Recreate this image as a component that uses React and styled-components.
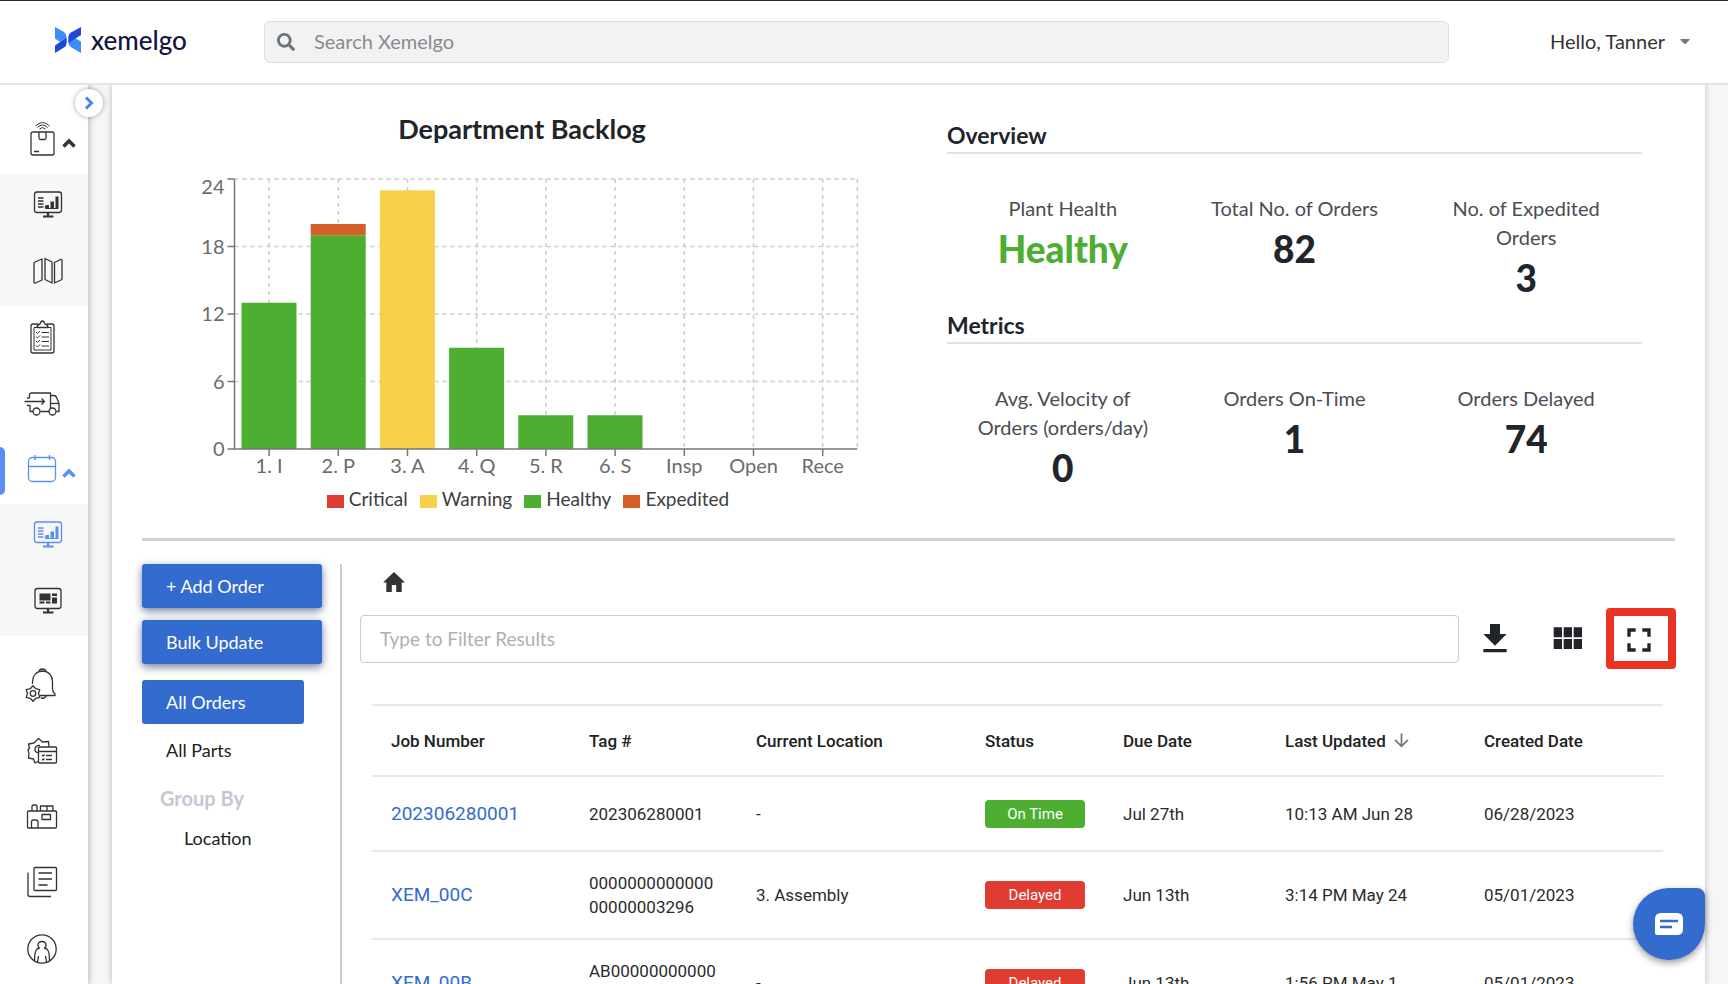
import React from "react";
import styled, { createGlobalStyle } from "styled-components";
import { FaSearch, FaCaretDown } from "react-icons/fa";
import { MdArrowDownward, MdFullscreen } from "react-icons/md";

const GlobalStyle = createGlobalStyle`
  * {
    box-sizing: border-box;
  }

  body {
    margin: 0;
    color: #212529;
    background: #f6f6f6;
    font-family: Lato, "Liberation Sans", sans-serif;
    font-size: 20px;
  }

  button, input {
    font: inherit;
    color: inherit;
  }

  button {
    padding: 0;
    border: 0;
    background: none;
    cursor: pointer;
  }
`;

const Page = styled.div`
  display: flex;
  flex-direction: column;
  height: 100vh;
  overflow: hidden;
`;

const Header = styled.header`
  display: flex;
  flex: none;
  align-items: center;
  height: 85px;
  border-top: 1px solid #2b2b2f;
  border-bottom: 2px solid #e5e5e5;
  background: #fff;
  z-index: 2;
`;

const Logo = styled.a`
  display: flex;
  flex: none;
  align-items: center;
  gap: 10px;
  width: 264px;
  padding: 0 0 4px 55px;
  color: #14153f;
  font-size: 26px;
  line-height: 32px;
  font-weight: 500;
  text-decoration: none;
`;

const SearchBox = styled.label`
  display: flex;
  flex: 1;
  align-items: center;
  gap: 19px;
  height: 42px;
  padding: 0 12px;
  border: 1px solid #d9dee3;
  border-radius: 6px;
  background: #f2f2f2;
  color: #6c757d;
`;

const SearchInput = styled.input`
  flex: 1;
  min-width: 0;
  padding: 0 0 2px;
  border: 0;
  outline: 0;
  background: none;

  &::placeholder {
    color: #868b91;
    opacity: 1;
  }
`;

const UserMenu = styled.button`
  display: flex;
  flex: none;
  align-items: center;
  justify-content: flex-end;
  gap: 12px;
  width: 279px;
  padding: 0 35px 2px 0;
  color: #333;

  svg {
    color: #777;
  }
`;

const Body = styled.div`
  display: flex;
  flex: 1;
  min-height: 0;
`;

const Sidebar = styled.nav`
  position: relative;
  flex: none;
  width: 88px;
  padding-top: 23px;
  background: #fff;
  box-shadow: 0 0 7px rgba(0, 0, 0, 0.35);
  z-index: 1;
`;

const ExpandButton = styled.button`
  position: absolute;
  top: 4px;
  right: -15px;
  display: flex;
  align-items: center;
  justify-content: center;
  width: 28px;
  height: 28px;
  border-radius: 50%;
  background: #fff;
  box-shadow: 0 0 5px rgba(0, 0, 0, 0.35);
`;

const NavItem = styled.button`
  display: flex;
  align-items: center;
  width: 100%;
  height: 66px;
  padding-bottom: 5px;
  color: ${(props) => (props.$active ? "#5b8ff5" : "#333")};
`;

const Marker = styled.span`
  width: 5px;
  height: 48px;
  margin: 5px ${(props) => (props.$nested ? "25px" : "19px")} 0 0;
  border-radius: 0 6px 6px 0;
  background: ${(props) => (props.$on ? "#5b8ff5" : "transparent")};
`;

const Caret = styled.svg`
  margin: 9px 0 0 2px;
`;

const SubMenu = styled.div`
  background: #f7f7f7;
`;

const NavGroup = styled.div`
  margin-top: 18px;
`;

const Card = styled.main`
  display: flex;
  flex: 1;
  flex-direction: column;
  min-width: 0;
  margin: 0 23px 0 24px;
  padding: 25px 30px 0;
  background: #fff;
  box-shadow: 0 0 6px rgba(0, 0, 0, 0.25);
`;

const Summary = styled.section`
  display: grid;
  grid-template-columns: minmax(0, 760fr) minmax(0, 773fr);
  padding-bottom: 25px;
  border-bottom: 3px solid #d2d2d2;
`;

const ChartTitle = styled.h2`
  margin: 0;
  font-size: 27px;
  line-height: 37px;
  text-align: center;
`;

const ChartSvg = styled.svg`
  display: block;
  width: 100%;

  text {
    fill: #6b6b6b;
    font-size: 20px;
  }
`;

const Legend = styled.ul`
  display: flex;
  justify-content: center;
  gap: 12px;
  margin: 0;
  padding: 0 0 0 12px;
  font-size: 19px;
  line-height: 28px;
  list-style: none;
`;

const LegendItem = styled.li`
  display: flex;
  align-items: center;
  gap: 5px;
  color: #3b3e42;

  &::before {
    content: "";
    width: 17px;
    height: 13px;
    margin-top: 4px;
    background: ${(props) => props.$color};
  }
`;

const Stats = styled.div`
  display: flex;
  flex-direction: column;
  gap: 11px;
  padding: 12px 33px 0 45px;
`;

const StatsTitle = styled.h3`
  margin: 0;
  padding-bottom: 4px;
  border-bottom: 2px solid #e2e2e2;
  font-size: 23px;
  line-height: 26px;
`;

const StatsRow = styled.div`
  display: grid;
  grid-template-columns: repeat(3, 1fr);
  min-height: 147px;
  padding-top: 40px;
  text-align: center;
`;

const StatLabel = styled.div`
  padding: 0 30px;
  color: #4a4d52;
  line-height: 29px;
`;

const StatValue = styled.div`
  margin-top: 4px;
  color: ${(props) => props.$color || "#212529"};
  font-size: 37px;
  font-weight: 900;
  line-height: 44px;
`;

const Orders = styled.section`
  display: flex;
  flex: 1;
  min-height: 0;
  padding-top: 23px;
`;

const Actions = styled.aside`
  display: flex;
  flex: none;
  flex-direction: column;
  align-items: flex-start;
  width: 200px;
  border-right: 2px solid #ccc;
  font-size: 18px;
`;

const ActionButton = styled.button`
  width: 180px;
  height: 44px;
  margin-bottom: 12px;
  padding-left: 24px;
  border-radius: 3px;
  background: #336bce;
  box-shadow: 0 3px 8px rgba(20, 40, 80, 0.6);
  color: #fff;
  text-align: left;
`;

const ViewLink = styled.a`
  width: 162px;
  margin-left: ${(props) => (props.$indent ? "18px" : "0")};
  padding-left: 24px;
  line-height: 40px;
  color: #212121;
  text-decoration: none;

  &[aria-current] {
    margin: 4px 0 6px;
    border-radius: 3px;
    background: #336bce;
    color: #fff;
    line-height: 44px;
  }
`;

const GroupTitle = styled.h4`
  margin: 8px 0 0 18px;
  color: #c3c8d2;
  font-size: 20px;
  line-height: 40px;
`;

const Results = styled.div`
  flex: 1;
  min-width: 0;
  padding-left: 18px;
`;

const HomeLink = styled.a`
  display: block;
  height: 44px;
  padding: 8px 0 0 23px;
  color: #333;

  svg {
    display: block;
  }
`;

const Toolbar = styled.div`
  display: flex;
  align-items: center;
`;

const FilterInput = styled.input`
  flex: 1;
  min-width: 0;
  height: 48px;
  margin-right: 16px;
  padding: 0 19px;
  border: 1px solid #ccc;
  border-radius: 4px;
  outline: 0;
  background: #fff;
  font-size: 19px;

  &::placeholder {
    color: #b0b0b0;
    opacity: 1;
  }
`;

const IconButton = styled.button`
  display: flex;
  align-items: center;
  justify-content: center;
  width: 40px;
  height: 40px;
  margin-right: 32px;
`;

const HighlightButton = styled.button`
  display: flex;
  align-items: center;
  justify-content: center;
  width: 70px;
  height: 61px;
  margin: 0 -1px 0 -13px;
  padding: 2px 4px 0 0;
  border: 8px solid #ea3323;
  border-radius: 4px;
`;

const Table = styled.table`
  width: calc(100% - 24px);
  margin: 35px 12px 0;
  border-collapse: collapse;
  table-layout: fixed;
  color: #2b2b2b;
  font-family: Roboto, "Liberation Sans", sans-serif;
  font-size: 17px;
  line-height: 24px;
`;

const HeadCell = styled.th`
  width: ${(props) => (props.$width ? `${props.$width}px` : "auto")};
  height: 71px;
  padding: 0 0 0 19px;
  border-top: 2px solid #e8e8e8;
  border-bottom: 2px solid #e8e8e8;
  color: #212121;
  font-weight: 500;
  text-align: left;

  svg {
    margin: -4px 0 0 5px;
    color: #757575;
    vertical-align: middle;
  }
`;

const Cell = styled.td`
  height: 75px;
  padding: 19px;
  border-bottom: 2px solid #e8e8e8;
  word-break: break-all;
`;

const DateCell = styled(Cell)`
  word-break: normal;
  white-space: nowrap;
`;

const JobLink = styled.a`
  color: #336bce;
  font-size: 19px;
  text-decoration: none;
`;

const Status = styled.span`
  display: block;
  width: 100px;
  border-radius: 4px;
  background: ${(props) => (props.$late ? "#e13c32" : "#4eae32")};
  color: #fff;
  font-size: 15px;
  line-height: 28px;
  text-align: center;
`;

const ChatButton = styled.button`
  position: fixed;
  right: 23px;
  bottom: 24px;
  display: flex;
  align-items: center;
  justify-content: center;
  width: 72px;
  height: 72px;
  border-radius: 50% 8px 50% 50%;
  background: #336bce;
  box-shadow: 0 3px 7px rgba(0, 0, 0, 0.4);
  z-index: 3;
`;

const COLORS = {
  critical: "#e13c32",
  warning: "#f7d14c",
  healthy: "#4eae32",
  expedited: "#d36027",
};

const backlog = [
  { name: "1. I", healthy: 13 },
  { name: "2. P", healthy: 19, expedited: 1 },
  { name: "3. A", warning: 23 },
  { name: "4. Q", healthy: 9 },
  { name: "5. R", healthy: 3 },
  { name: "6. S", healthy: 3 },
  { name: "Insp" },
  { name: "Open" },
  { name: "Rece" },
];

const overview = [
  { label: "Plant Health", value: "Healthy", color: COLORS.healthy },
  { label: "Total No. of Orders", value: "82" },
  { label: "No. of Expedited Orders", value: "3" },
];

const metrics = [
  { label: "Avg. Velocity of Orders (orders/day)", value: "0" },
  { label: "Orders On-Time", value: "1" },
  { label: "Orders Delayed", value: "74" },
];

const columns = [
  { title: "Job Number", width: 198 },
  { title: "Tag #", width: 167 },
  { title: "Current Location", width: 229 },
  { title: "Status", width: 138 },
  { title: "Due Date", width: 162 },
  { title: "Last Updated", width: 199, sorted: true },
  { title: "Created Date" },
];

const orders = [
  {
    job: "202306280001",
    tag: "202306280001",
    location: "-",
    late: false,
    due: "Jul 27th",
    updated: "10:13 AM Jun 28",
    created: "06/28/2023",
  },
  {
    job: "XEM_00C",
    tag: "000000000000000000003296",
    location: "3. Assembly",
    late: true,
    due: "Jun 13th",
    updated: "3:14 PM May 24",
    created: "05/01/2023",
  },
  {
    job: "XEM_00B",
    tag: "AB0000000000000000000000",
    location: "-",
    late: true,
    due: "Jun 13th",
    updated: "1:56 PM May 1",
    created: "05/01/2023",
  },
];

// sidebar icons share a 36x36 box
const icons = {
  package: (
    <>
      <rect x="7" y="11" width="23" height="23" rx="2" />
      <path d="M15 11v6q0 1.500 1.500 1.500h4q1.500 0 1.500-1.500v-6M10 30.500h5" />
      <path
        d="M11.500 5q7-7 14 0M13.500 6.500q5-5 10 0M15.500 8q3-3 6 0"
        strokeWidth="1"
      />
    </>
  ),
  chart: (
    <>
      <rect x="4.500" y="5" width="27" height="20.500" rx="2.500" />
      <path d="M8 11h5.500M8 14h5.500M8 17h5.500M8 20h5.500" />
      <path d="M15.500 21v-3h3.500v3zM20.500 21v-6.500h3.500v6.500zM25.500 21V9.500h3v11.500z" fill="currentColor" stroke="none" />
      <path d="M15.500 19v2.500h13" strokeWidth="1" />
      <path d="M18 26v3M13 29.500h10.500" strokeWidth="2.200" />
    </>
  ),
  board: (
    <>
      <rect x="5" y="5.500" width="26" height="20" rx="2.500" />
      <path
        d="M9.500 10.500h11v7h-11zM22 10.500h5v2.500h-5zM22 14.500h5v6h-5zM9.500 18.500h5v2h-5zM16 18.500h4.500v2H16z"
        fill="currentColor"
        stroke="none"
      />
      <path d="M18 26v3M13 29.500h10.500" strokeWidth="2.200" />
    </>
  ),
  map: (
    <path d="M4 10.500q0-1 1-1.500l7-3v21l-6.500 3Q4 30.500 4 29zM15 5.500l7 3.500v21l-7-3.500zM24.500 9.500l6-3q1.500-.5 1.500 1v18q0 1-1 1.500l-6.500 3z" />
  ),
  clipboard: (
    <>
      <path d="M14 5H9Q7 5 7 7v25q0 2 2 2h19q2 0 2-2V7q0-2-2-2h-5" />
      <path d="M14 8.500H10v22.500h17V8.500H23" strokeWidth="1" />
      <path d="M13 8.500q0-3 3-3.500 1-3 2.500-3t2.500 3q3 .5 3 3.500z" />
      <path d="M12 13l1.500 1.500L16 12M17.500 13.500H25M12 17.500l1.500 1.500L16 16.500M17.500 18H25M12 22l1.500 1.500L16 21M17.500 22.500H25M12 26.500l1.500 1.500L16 25.500M17.500 27H25" strokeWidth="1" />
    </>
  ),
  truck: (
    <>
      <path d="M5.500 13H3M5.500 13V10q0-2 2-2h19v18.500H16.500M9 26.500H6v-6H3M.5 16.500h20M17.500 13.500l3 3-3 3M26.500 10.500h3.500q2 0 3 3l2 5v8h-2.500" />
      <path d="M27 18.500h8" />
      <circle cx="12.500" cy="26.500" r="3.500" fill="#fff" />
      <circle cx="28.500" cy="26.500" r="3.500" fill="#fff" />
    </>
  ),
  calendar: (
    <>
      <rect x="4.500" y="6.500" width="27" height="24" rx="4" />
      <path d="M4.500 15.500h27M11 4v5M25.500 4v5" />
    </>
  ),
  alerts: (
    <>
      <path d="M8.500 17v-2Q9 4.500 18.500 4q9.500.5 10 10.500v7q0 3.500 2.500 5.500v1.500H16M15 4.500q.5-2.500 3.500-2.500t3.500 2.500M17 31q4 1 5.500-2.500" />
      <path d="M9 18.700l2.700 3 4.100.9-1.300 3.900 1.300 3.900-4.100.9-2.700 3-2.700-3-4.100-.9 1.300-3.900-1.300-3.900 4.100-.9z" fill="#fff" />
      <circle cx="9" cy="26.500" r="2.800" />
    </>
  ),
  settings: (
    <>
      <path d="M15 28l-4 2-1.500-4-5-1 .5-4.500-1-3.500 1.500-2-1-4 5.500-1L14.500 5.500 18.500 9l6-.5.5 5.500" />
      <path d="M14.500 20q-4.500-1-3.500-4.500 1-3.500 5-3" />
      <rect x="14.500" y="14" width="18" height="16" rx="1" fill="#fff" />
      <path d="M14.500 18.500h18M18 22l1 1 1.500-1.500M22 22.500h6M18 26l1 1 1.500-1.500M22 26.500h6" />
    </>
  ),
  factory: (
    <>
      <rect x="3.500" y="12" width="29" height="17" rx="1" />
      <path d="M8 12V7.500q0-1.500 1.500-1.500h2q1.500 0 1.500 1.500V12M16.500 12V7h12.500v5M23 7v5M7.500 29v-6q0-2 2-2h2.500q2 0 2 2v6M18 15.500h8.500v5H18z" />
    </>
  ),
  reports: (
    <>
      <rect x="10" y="2.500" width="22.500" height="23" rx="1" />
      <path d="M4 7.500v22q0 2 2 2h21M14.500 8h13.500M14.500 14h13.500M14.500 20h9" />
    </>
  ),
  profile: (
    <>
      <circle cx="18" cy="18" r="14.200" />
      <path d="M10.500 30q0-8 1.500-10.500 1-2 3.500-2.500-2-1.500-1.500-3.500.5-3 4-3t4 3q.5 2-1.500 3.500 2.500.5 3.500 2.500 1.500 2.500 1.500 10.500M14.500 25l-1 6M21.500 25l1 6" />
    </>
  ),
};

function NavLink({ icon, label, nested, active, marked, open }) {
  return (
    <NavItem type="button" aria-label={label} $active={active}>
      <Marker $nested={nested} $on={marked} />
      <svg
        width="36"
        height="36"
        viewBox="0 0 36 36"
        fill="none"
        stroke="currentColor"
        strokeWidth="1.300"
        strokeLinejoin="round"
      >
        {icons[icon]}
      </svg>
      {open && (
        <Caret width="14" height="10" viewBox="0 0 14 10" fill="none" stroke="currentColor" strokeWidth="3.500">
          <path d="M1.500 8.500L7 3l5.500 5.500" />
        </Caret>
      )}
    </NavItem>
  );
}

function BacklogChart() {
  const left = 92.5;
  const top = 32;
  const bottom = 302;
  const step = 69.2;
  const right = left + step * backlog.length;
  const unit = (bottom - top) / 24;
  const ticks = [0, 6, 12, 18, 24];

  return (
    <ChartSvg viewBox="0 0 760 338" role="img" aria-label="Department Backlog">
      <g stroke="#ccc" strokeWidth="1.500" strokeDasharray="4 4">
        {ticks.slice(1).map((t) => (
          <line key={t} x1={left} x2={right} y1={bottom - t * unit} y2={bottom - t * unit} />
        ))}
        {backlog.map((d, i) => (
          <line key={d.name} x1={left + step * (i + 0.5)} x2={left + step * (i + 0.5)} y1={top} y2={bottom} />
        ))}
        <line x1={right} x2={right} y1={top} y2={bottom} />
      </g>
      {backlog.map((d, i) => {
        let y = bottom;
        return ["critical", "warning", "healthy", "expedited"].map((key) => {
          if (!d[key]) return null;
          y -= d[key] * unit;
          return (
            <rect
              key={d.name + key}
              x={left + step * i + 7}
              y={y}
              width="55"
              height={d[key] * unit}
              fill={COLORS[key]}
            />
          );
        });
      })}
      <g stroke="#777" strokeWidth="1.500">
        <path d={`M${left} ${top}V${bottom}H${right}`} fill="none" />
        {ticks.map((t) => (
          <line key={t} x1={left - 7} x2={left} y1={bottom - t * unit} y2={bottom - t * unit} />
        ))}
        {backlog.map((d, i) => (
          <line key={d.name} x1={left + step * (i + 0.5)} x2={left + step * (i + 0.5)} y1={bottom} y2={bottom + 7} />
        ))}
      </g>
      {ticks.map((t) => (
        <text key={t} x={left - 10} y={t === 24 ? 47 : bottom - t * unit + 7} textAnchor="end">
          {t}
        </text>
      ))}
      {backlog.map((d, i) => (
        <text key={d.name} x={left + step * (i + 0.5)} y={bottom + 24} textAnchor="middle">
          {d.name}
        </text>
      ))}
    </ChartSvg>
  );
}

function StatsSection({ title, items }) {
  return (
    <section>
      <StatsTitle>{title}</StatsTitle>
      <StatsRow>
        {items.map((item) => (
          <div key={item.label}>
            <StatLabel>{item.label}</StatLabel>
            <StatValue $color={item.color}>{item.value}</StatValue>
          </div>
        ))}
      </StatsRow>
    </section>
  );
}

function OrdersTable() {
  return (
    <Table>
      <thead>
        <tr>
          {columns.map((col) => (
            <HeadCell key={col.title} scope="col" $width={col.width}>
              {col.title}
              {col.sorted && <MdArrowDownward size={21} />}
            </HeadCell>
          ))}
        </tr>
      </thead>
      <tbody>
        {orders.map((order) => (
          <tr key={order.job}>
            <Cell>
              <JobLink href="#">{order.job}</JobLink>
            </Cell>
            <Cell>{order.tag}</Cell>
            <Cell>{order.location}</Cell>
            <Cell>
              <Status $late={order.late}>{order.late ? "Delayed" : "On Time"}</Status>
            </Cell>
            <DateCell>{order.due}</DateCell>
            <DateCell>{order.updated}</DateCell>
            <DateCell>{order.created}</DateCell>
          </tr>
        ))}
      </tbody>
    </Table>
  );
}

function App() {
  return (
    <Page>
      <GlobalStyle />
      <Header>
        <Logo href="#">
          <svg width="26" height="26" viewBox="0 0 26 26">
            <path d="M0 0l9 5q2.700 2 2.700 5.500L5 15l-5-3.500z" fill="#3d8bfd" />
            <path d="M0 26v-7.500l11.700-8V16q0 3-2.700 4.500z" fill="#1d48d8" />
            <path d="M26 26l-9.500-5.500q-3.200-2-3.200-5L20 11l6 3.500z" fill="#3d8bfd" />
            <path d="M26 0v8l-12.700 8v-6q0-3 2.700-4.500z" fill="#1d48d8" />
          </svg>
          xemelgo
        </Logo>
        <SearchBox>
          <FaSearch size={18} />
          <SearchInput type="text" placeholder="Search Xemelgo" aria-label="Search Xemelgo" />
        </SearchBox>
        <UserMenu type="button">
          Hello, Tanner
          <FaCaretDown size={16} />
        </UserMenu>
      </Header>
      <Body>
        <Sidebar>
          <ExpandButton type="button" aria-label="Expand menu">
            <svg width="10" height="14" viewBox="0 0 10 14" fill="none" stroke="#4a80f5" strokeWidth="3">
              <path d="M2 1.500L7.500 7 2 12.500" />
            </svg>
          </ExpandButton>
          <NavLink icon="package" label="Tracking" open />
          <SubMenu>
            <NavLink icon="chart" label="Tracking dashboard" nested />
            <NavLink icon="map" label="Map" nested />
          </SubMenu>
          <NavLink icon="clipboard" label="Checklist" />
          <NavLink icon="truck" label="Shipments" />
          <NavLink icon="calendar" label="Orders" active marked open />
          <SubMenu>
            <NavLink icon="chart" label="Orders dashboard" nested active />
            <NavLink icon="board" label="Order board" nested />
          </SubMenu>
          <NavGroup>
            <NavLink icon="alerts" label="Alerts" />
            <NavLink icon="settings" label="Settings" />
            <NavLink icon="factory" label="Facilities" />
            <NavLink icon="reports" label="Reports" />
            <NavLink icon="profile" label="Profile" />
          </NavGroup>
        </Sidebar>
        <Card>
          <Summary>
            <div>
              <ChartTitle>Department Backlog</ChartTitle>
              <BacklogChart />
              <Legend>
                <LegendItem $color={COLORS.critical}>Critical</LegendItem>
                <LegendItem $color={COLORS.warning}>Warning</LegendItem>
                <LegendItem $color={COLORS.healthy}>Healthy</LegendItem>
                <LegendItem $color={COLORS.expedited}>Expedited</LegendItem>
              </Legend>
            </div>
            <Stats>
              <StatsSection title="Overview" items={overview} />
              <StatsSection title="Metrics" items={metrics} />
            </Stats>
          </Summary>
          <Orders>
            <Actions>
              <ActionButton type="button">+ Add Order</ActionButton>
              <ActionButton type="button">Bulk Update</ActionButton>
              <ViewLink href="#" aria-current="page">
                All Orders
              </ViewLink>
              <ViewLink href="#">All Parts</ViewLink>
              <GroupTitle>Group By</GroupTitle>
              <ViewLink href="#" $indent>
                Location
              </ViewLink>
            </Actions>
            <Results>
              <HomeLink href="#" aria-label="Home">
                <svg width="22" height="20" viewBox="2 3 20 17" preserveAspectRatio="none" fill="currentColor">
                  <path d="M10 20v-6h4v6h5v-8h3L12 3 2 12h3v8z" />
                </svg>
              </HomeLink>
              <Toolbar>
                <FilterInput
                  type="text"
                  placeholder="Type to Filter Results"
                  aria-label="Type to Filter Results"
                />
                <IconButton type="button" aria-label="Download">
                  <svg width="40" height="40" viewBox="0 0 24 24" fill="currentColor">
                    <path d="M19 9h-4V3H9v6H5l7 7 7-7zM5 18v2h14v-2H5z" />
                  </svg>
                </IconButton>
                <IconButton type="button" aria-label="Grid view">
                  <svg width="40" height="40" viewBox="0 0 24 24" fill="currentColor">
                    <path d="M4 11h5V5H4v6zm0 7h5v-6H4v6zm6 0h5v-6h-5v6zm6 0h5v-6h-5v6zm-6-7h5V5h-5v6zm6-6v6h5V5h-5z" />
                  </svg>
                </IconButton>
                <HighlightButton type="button" aria-label="Full screen">
                  <MdFullscreen size={40} />
                </HighlightButton>
              </Toolbar>
              <OrdersTable />
            </Results>
          </Orders>
        </Card>
      </Body>
      <ChatButton type="button" aria-label="Open chat">
        <svg width="28" height="22" viewBox="0 0 28 22">
          <path d="M6 0h16q6 0 6 6v10q0 6-6 6H2q-2 0-2-2V6q0-6 6-6z" fill="#fff" />
          <path d="M5 8h18M5 14h12" stroke="#336bce" strokeWidth="2.500" />
        </svg>
      </ChatButton>
    </Page>
  );
}

export default App;
